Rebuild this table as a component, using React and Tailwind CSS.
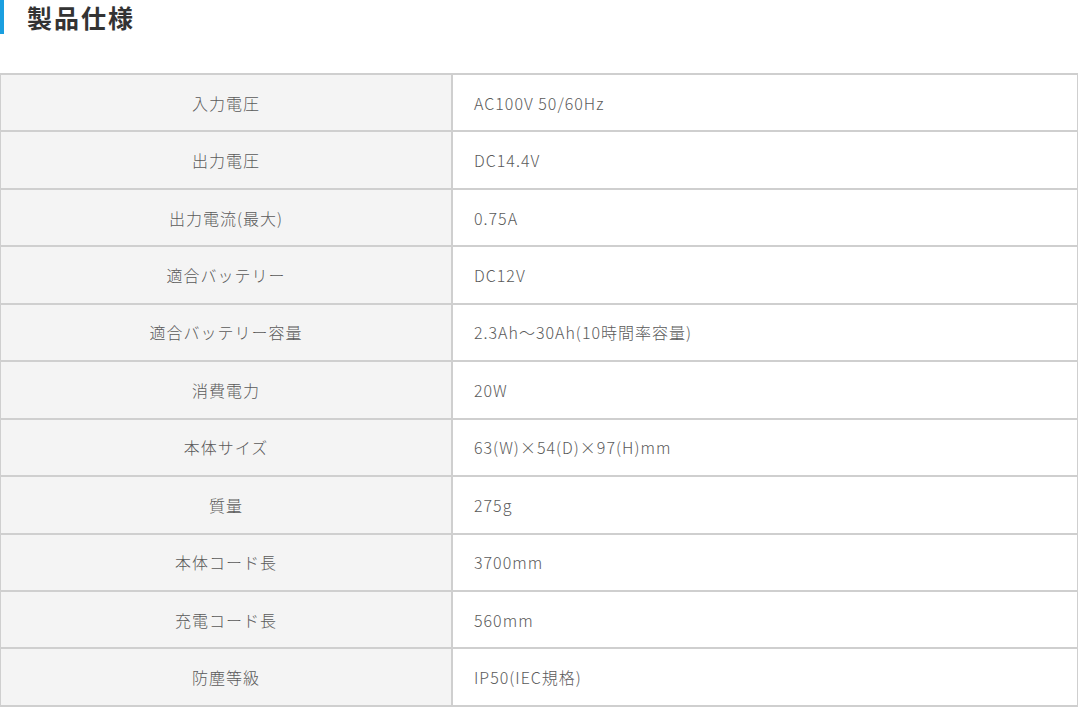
const specs = [
  ["入力電圧", "AC100V 50/60Hz"],
  ["出力電圧", "DC14.4V"],
  ["出力電流(最大)", "0.75A"],
  ["適合バッテリー", "DC12V"],
  ["適合バッテリー容量", "2.3Ah〜30Ah(10時間率容量)"],
  ["消費電力", "20W"],
  ["本体サイズ", "63(W)×54(D)×97(H)mm"],
  ["質量", "275g"],
  ["本体コード長", "3700mm"],
  ["充電コード長", "560mm"],
  ["防塵等級", "IP50(IEC規格)"],
];

export default function App() {
  return (
    <div className="w-[1078px] bg-white" style={{ fontFamily: '"Noto Sans CJK JP", "Noto Sans", sans-serif' }}>
      {/* 見出し */}
      <div className="h-[34px] flex items-center border-l-4 border-[#1a9fe0] pl-[23px]">
        <h2 className="text-[25px] font-bold text-[#333] leading-none tracking-[2px]">製品仕様</h2>
      </div>

      {/* 仕様表 */}
      <div className="mt-[39px] border-t-2 border-x border-[#cfcfcf]">
        {specs.map(([label, value]) => (
          <div key={label} className="flex h-[57.45px] border-b-2 border-[#cfcfcf]">
            <div className="w-[452px] shrink-0 bg-[#f4f4f4] border-r-2 border-[#cfcfcf] flex items-center justify-center text-[16px] font-light text-[#5a5a5a] tracking-[1px]">
              {label}
            </div>
            <div className="flex-1 flex items-center pl-[21px] text-[16px] font-light text-[#5a5a5a] tracking-[1px]">
              {value}
            </div>
          </div>
        ))}
      </div>
    </div>
  );
}
